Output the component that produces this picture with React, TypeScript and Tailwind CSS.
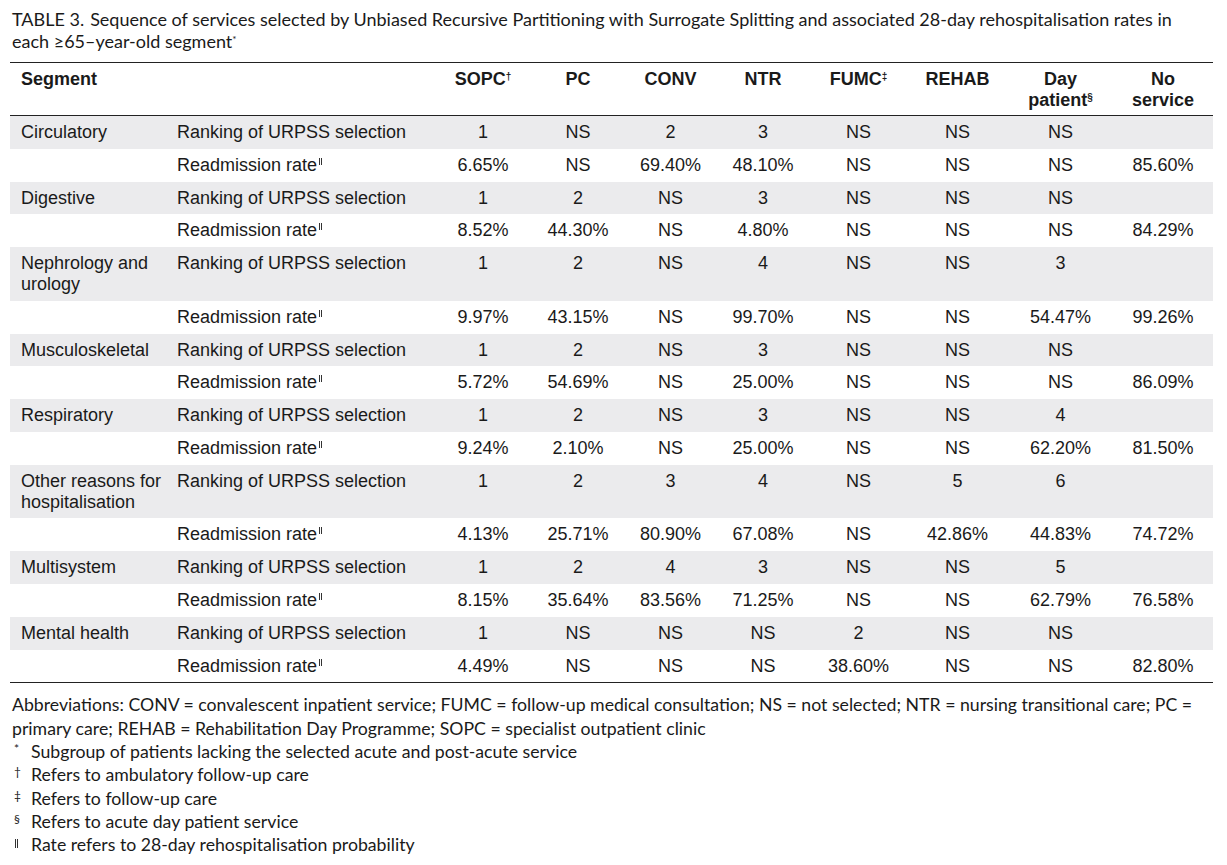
import React from "react";

type Row = {
  segment: string;
  rank: string[];
  rate: string[];
};

// values per column: SOPC, PC, CONV, NTR, FUMC, REHAB, Day patient, No service
const ROWS: Row[] = [
  {
    segment: "Circulatory",
    rank: ["1", "NS", "2", "3", "NS", "NS", "NS", ""],
    rate: ["6.65%", "NS", "69.40%", "48.10%", "NS", "NS", "NS", "85.60%"],
  },
  {
    segment: "Digestive",
    rank: ["1", "2", "NS", "3", "NS", "NS", "NS", ""],
    rate: ["8.52%", "44.30%", "NS", "4.80%", "NS", "NS", "NS", "84.29%"],
  },
  {
    segment: "Nephrology and urology",
    rank: ["1", "2", "NS", "4", "NS", "NS", "3", ""],
    rate: ["9.97%", "43.15%", "NS", "99.70%", "NS", "NS", "54.47%", "99.26%"],
  },
  {
    segment: "Musculoskeletal",
    rank: ["1", "2", "NS", "3", "NS", "NS", "NS", ""],
    rate: ["5.72%", "54.69%", "NS", "25.00%", "NS", "NS", "NS", "86.09%"],
  },
  {
    segment: "Respiratory",
    rank: ["1", "2", "NS", "3", "NS", "NS", "4", ""],
    rate: ["9.24%", "2.10%", "NS", "25.00%", "NS", "NS", "62.20%", "81.50%"],
  },
  {
    segment: "Other reasons for hospitalisation",
    rank: ["1", "2", "3", "4", "NS", "5", "6", ""],
    rate: ["4.13%", "25.71%", "80.90%", "67.08%", "NS", "42.86%", "44.83%", "74.72%"],
  },
  {
    segment: "Multisystem",
    rank: ["1", "2", "4", "3", "NS", "NS", "5", ""],
    rate: ["8.15%", "35.64%", "83.56%", "71.25%", "NS", "NS", "62.79%", "76.58%"],
  },
  {
    segment: "Mental health",
    rank: ["1", "NS", "NS", "NS", "2", "NS", "NS", ""],
    rate: ["4.49%", "NS", "NS", "NS", "38.60%", "NS", "NS", "82.80%"],
  },
];

const NOTES = [
  { mark: "*", text: "Subgroup of patients lacking the selected acute and post-acute service" },
  { mark: "†", text: "Refers to ambulatory follow-up care" },
  { mark: "‡", text: "Refers to follow-up care" },
  { mark: "§", text: "Refers to acute day patient service" },
  { mark: "‖", text: "Rate refers to 28-day rehospitalisation probability" },
];

const gill = { fontFamily: "Lato, 'Open Sans', sans-serif" };
const arial = { fontFamily: "'Liberation Sans', Arial, sans-serif" };

// small double bar used as the "‖" footnote mark
function Bars({ className = "" }: { className?: string }) {
  return <span className={`inline-block w-[3px] h-[7px] border-l border-r border-[#333] ${className}`} />;
}

export default function App() {
  return (
    <div className="w-[1227px] h-[865px] bg-white text-[#1a1a1a] overflow-hidden">
      {/* Caption */}
      <div className="pl-[12px] pt-[8px] text-[18px] leading-[22px] whitespace-nowrap" style={gill}>
        <span>TABLE 3.</span>
        <span className="ml-[6px]">
          Sequence of services selected by Unbiased Recursive Partitioning with Surrogate Splitting and associated
          28-day rehospitalisation rates in
        </span>
        <br />
        <span>each ≥65–year-old segment</span>
        <sup className="text-[10px]">*</sup>
      </div>

      {/* Table */}
      <table
        className="ml-[10px] mt-[10px] w-[1203px] table-fixed border-collapse text-[18px] leading-[20.8px]"
        style={arial}
      >
        <colgroup>
          <col className="w-[160px]" />
          <col className="w-[265px]" />
          <col className="w-[96px]" />
          <col className="w-[94px]" />
          <col className="w-[91px]" />
          <col className="w-[94px]" />
          <col className="w-[97px]" />
          <col className="w-[101px]" />
          <col className="w-[105px]" />
          <col className="w-[100px]" />
        </colgroup>
        <thead>
          <tr className="border-t border-b border-[#222] align-top font-bold">
            <th colSpan={2} className="text-left pl-[11px] pt-[6px] pb-[10px] h-[53px]">
              Segment
            </th>
            <th className="text-center pt-[6px]">
              SOPC<sup className="text-[10px]">†</sup>
            </th>
            <th className="text-center pt-[6px]">PC</th>
            <th className="text-center pt-[6px]">CONV</th>
            <th className="text-center pt-[6px]">NTR</th>
            <th className="text-center pt-[6px]">
              FUMC<sup className="text-[10px]">‡</sup>
            </th>
            <th className="text-center pt-[6px]">REHAB</th>
            <th className="text-center pt-[6px]">
              Day
              <br />
              patient<sup className="text-[10px]">§</sup>
            </th>
            <th className="text-center pt-[6px]">
              No
              <br />
              service
            </th>
          </tr>
        </thead>
        <tbody>
          {ROWS.map((row, i) => (
            <React.Fragment key={row.segment}>
              <tr className="bg-[#ebebed] align-top">
                <td className="pl-[11px] pr-1 py-[6px]">{row.segment}</td>
                <td className="pl-[7px] py-[6px] whitespace-nowrap">Ranking of URPSS selection</td>
                {row.rank.map((v, j) => (
                  <td key={j} className="text-center py-[6px]">
                    {v}
                  </td>
                ))}
              </tr>
              <tr className={`align-top ${i === ROWS.length - 1 ? "border-b border-[#222]" : ""}`}>
                <td className="py-[6px]" />
                <td className="pl-[7px] py-[6px] whitespace-nowrap">
                  Readmission rate
                  <Bars className="ml-[2px] align-[6px]" />
                </td>
                {row.rate.map((v, j) => (
                  <td key={j} className="text-center py-[6px]">
                    {v}
                  </td>
                ))}
              </tr>
            </React.Fragment>
          ))}
        </tbody>
      </table>

      {/* Footnotes */}
      <div className="pl-[12px] pt-[10px] text-[17.7px] leading-[23.3px] whitespace-nowrap" style={gill}>
        <p>
          Abbreviations: CONV = convalescent inpatient service; FUMC = follow-up medical consultation; NS = not
          selected; NTR = nursing transitional care; PC =
          <br />
          primary care; REHAB = Rehabilitation Day Programme; SOPC = specialist outpatient clinic
        </p>
        {NOTES.map((n) => (
          <div key={n.mark} className="flex items-start">
            <span className="w-[19px] pl-[2px] text-[12px] leading-[18px]">
              {n.mark === "‖" ? <Bars className="ml-[1px] mt-[6px] h-[9px]" /> : n.mark}
            </span>
            <span>{n.text}</span>
          </div>
        ))}
      </div>
    </div>
  );
}
